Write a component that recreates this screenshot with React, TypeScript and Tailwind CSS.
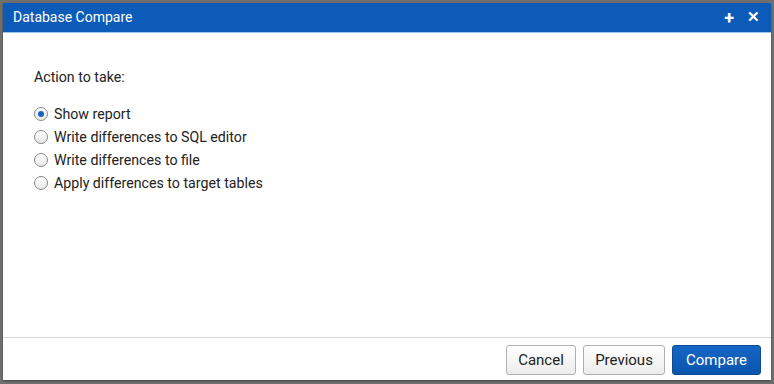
import { useState } from "react";

const options = [
    "Show report",
    "Write differences to SQL editor",
    "Write differences to file",
    "Apply differences to target tables",
];

function Radio({ checked }: { checked: boolean }) {
    return (
        <span className="w-[14px] h-[14px] rounded-full border border-[#8a8a8a] bg-gradient-to-b from-white to-[#e8e8e8] flex items-center justify-center shrink-0">
            {checked && <span className="w-[6px] h-[6px] rounded-full bg-[#1565c0]" />}
        </span>
    );
}

export default function App() {
    const [selected, setSelected] = useState(0);

    return (
        <div className="w-[774px] h-[384px] bg-[#707070] p-[3px] font-['Roboto',sans-serif]">
            <div className="w-[768px] h-[377px] bg-white flex flex-col shadow-[0_1px_2px_rgba(0,0,0,0.4)]">
                <div className="h-[30px] bg-[#0d5bb8] border-b border-[#9cc6ef] flex items-center pl-[10px] pr-[11px] text-white">
                    <span className="text-[14px] flex-1">Database Compare</span>
                    <span className="text-[18px] font-bold leading-none mr-[13px]">+</span>
                    <span className="text-[15px] font-bold leading-none">✕</span>
                </div>
                <div className="flex-1 pl-[31px] pt-[34px] text-[14.2px] text-[#222]">
                    <div className="mb-[17px]">Action to take:</div>
                    <div className="flex flex-col gap-[5px]">
                        {options.map((o, i) => (
                            <label key={o} className="flex items-center gap-[6px] h-[18px] cursor-pointer" onClick={() => setSelected(i)}>
                                <Radio checked={selected === i} />
                                <span>{o}</span>
                            </label>
                        ))}
                    </div>
                </div>
                <div className="h-[43px] border-t border-[#d6d6d6] flex items-start justify-end gap-[7px] pt-[7px] pr-[10px] text-[15px]">
                    <button className="h-[30px] w-[70px] rounded-[3px] border border-[#b0b0b0] bg-gradient-to-b from-white to-[#ececec] text-[#222]">Cancel</button>
                    <button className="h-[30px] w-[82px] rounded-[3px] border border-[#b0b0b0] bg-gradient-to-b from-white to-[#ececec] text-[#222]">Previous</button>
                    <button className="h-[30px] w-[89px] rounded-[3px] border border-[#0a4a96] bg-gradient-to-b from-[#1466c4] to-[#0b56ad] text-white">Compare</button>
                </div>
            </div>
        </div>
    );
}
